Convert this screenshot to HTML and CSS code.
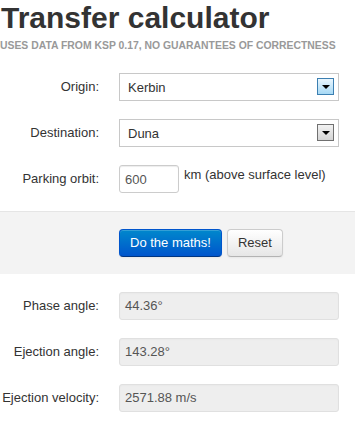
FILE: index.html
```html
<!DOCTYPE html>
<html lang="en">

<head>
    <meta charset="UTF-8">
    <meta name="viewport" content="width=device-width, initial-scale=1.0">
    <title>Transfer calculator</title>
    <link rel="stylesheet" href="styles.css">
</head>

<body>
    <div class="page-header">
        <h1>Transfer calculator</h1>
        <p class="subtitle">Uses data from KSP 0.17, no guarantees of correctness</p>
    </div>

    <form class="form-horizontal">
        <div class="control-group">
            <label class="control-label" for="origin">Origin:</label>
            <div class="controls">
                <div class="select-wrap">
                    <select id="origin">
                        <option>Kerbin</option>
                        <option>Eve</option>
                        <option>Duna</option>
                        <option>Jool</option>
                    </select>
                    <span class="select-arrow active"></span>
                </div>
            </div>
        </div>
        <div class="control-group">
            <label class="control-label" for="destination">Destination:</label>
            <div class="controls">
                <div class="select-wrap">
                    <select id="destination">
                        <option>Duna</option>
                        <option>Kerbin</option>
                        <option>Eve</option>
                        <option>Jool</option>
                    </select>
                    <span class="select-arrow"></span>
                </div>
            </div>
        </div>
        <div class="control-group">
            <label class="control-label" for="orbit">Parking orbit:</label>
            <div class="controls">
                <input type="text" id="orbit" class="input-mini" value="600">
                <span class="help-inline">km (above surface level)</span>
            </div>
        </div>

        <div class="form-actions">
            <button type="button" class="btn btn-primary">Do the maths!</button>
            <button type="reset" class="btn">Reset</button>
        </div>

        <div class="control-group">
            <label class="control-label">Phase angle:</label>
            <div class="controls">
                <span class="uneditable-input">44.36°</span>
            </div>
        </div>
        <div class="control-group">
            <label class="control-label">Ejection angle:</label>
            <div class="controls">
                <span class="uneditable-input">143.28°</span>
            </div>
        </div>
        <div class="control-group">
            <label class="control-label">Ejection velocity:</label>
            <div class="controls">
                <span class="uneditable-input">2571.88 m/s</span>
            </div>
        </div>
    </form>
</body>

</html>
```

FILE: styles.css
```css
body {
    font-family: 'Liberation Sans', Arial, sans-serif;
    font-size: 13px;
    line-height: 18px;
    color: #333;
    background-color: #ffffff;
    margin: 0;
    padding: 0;
}

.page-header {
    padding-left: 1px;
}

h1 {
    margin: 0;
    padding-top: 2px;
    font-size: 30px;
    line-height: 32px;
    font-weight: bold;
    color: #333;
}

.subtitle {
    margin: 6px 0 0 -1px;
    font-size: 10.4px;
    line-height: 12px;
    font-weight: bold;
    color: #999;
    text-transform: uppercase;
}

.form-horizontal {
    margin-top: 21px;
}

.control-group {
    display: flex;
    align-items: center;
    margin-bottom: 18px;
}

.control-label {
    width: 99px;
    text-align: right;
    flex-shrink: 0;
}

.controls {
    margin-left: 20px;
    display: flex;
    align-items: center;
}

.select-wrap {
    position: relative;
    width: 220px;
    height: 28px;
}

select {
    appearance: none;
    -webkit-appearance: none;
    width: 220px;
    height: 28px;
    padding: 0 0 0 8px;
    border: 1px solid #c8c8c8;
    border-radius: 0;
    background-color: #fff;
    font-family: inherit;
    font-size: 13px;
    color: #333;
    box-sizing: border-box;
}

.select-arrow {
    position: absolute;
    right: 5px;
    top: 5px;
    width: 17px;
    height: 17px;
    box-sizing: border-box;
    border: 1px solid #707070;
    background: linear-gradient(#f2f2f2, #d4d4d4);
    pointer-events: none;
}

.select-arrow::after {
    content: "";
    position: absolute;
    left: 4px;
    top: 6px;
    border-left: 4px solid transparent;
    border-right: 4px solid transparent;
    border-top: 4px solid #000;
}

.select-arrow.active {
    border-color: #3c7fb1;
    background: linear-gradient(#eaf6fd, #a7d9f5);
}

.input-mini {
    width: 60px;
    height: 28px;
    padding: 4px 5px;
    border: 1px solid #ccc;
    border-radius: 3px;
    font-family: inherit;
    font-size: 13px;
    color: #555;
    box-sizing: border-box;
    box-shadow: inset 0 1px 1px rgba(0, 0, 0, 0.075);
}

.help-inline {
    margin-left: 5px;
    align-self: flex-start;
    margin-top: 1px;
}

.form-actions {
    margin: 0 0 18px;
    padding: 17px 0 17px 119px;
    background-color: #f3f3f3;
    border-top: 1px solid #e5e5e5;
    display: flex;
    gap: 5px;
}

.btn {
    height: 28px;
    padding: 4px 10px;
    font-family: inherit;
    font-size: 13px;
    line-height: 18px;
    color: #333;
    border: 1px solid #ccc;
    border-bottom-color: #b3b3b3;
    border-radius: 4px;
    background: linear-gradient(#ffffff, #e6e6e6);
    box-shadow: inset 0 1px 0 rgba(255, 255, 255, 0.2), 0 1px 2px rgba(0, 0, 0, 0.05);
    cursor: pointer;
}

.btn-primary {
    color: #fff;
    border-color: #0055cc #0055cc #003580;
    background: linear-gradient(#0088cc, #0055cc);
}

.uneditable-input {
    display: block;
    width: 220px;
    height: 28px;
    padding: 4px 5px;
    border: 1px solid #e0e0e0;
    border-radius: 3px;
    background-color: #eeeeee;
    color: #555;
    box-sizing: border-box;
    box-shadow: inset 0 1px 2px rgba(0, 0, 0, 0.025);
}
```
